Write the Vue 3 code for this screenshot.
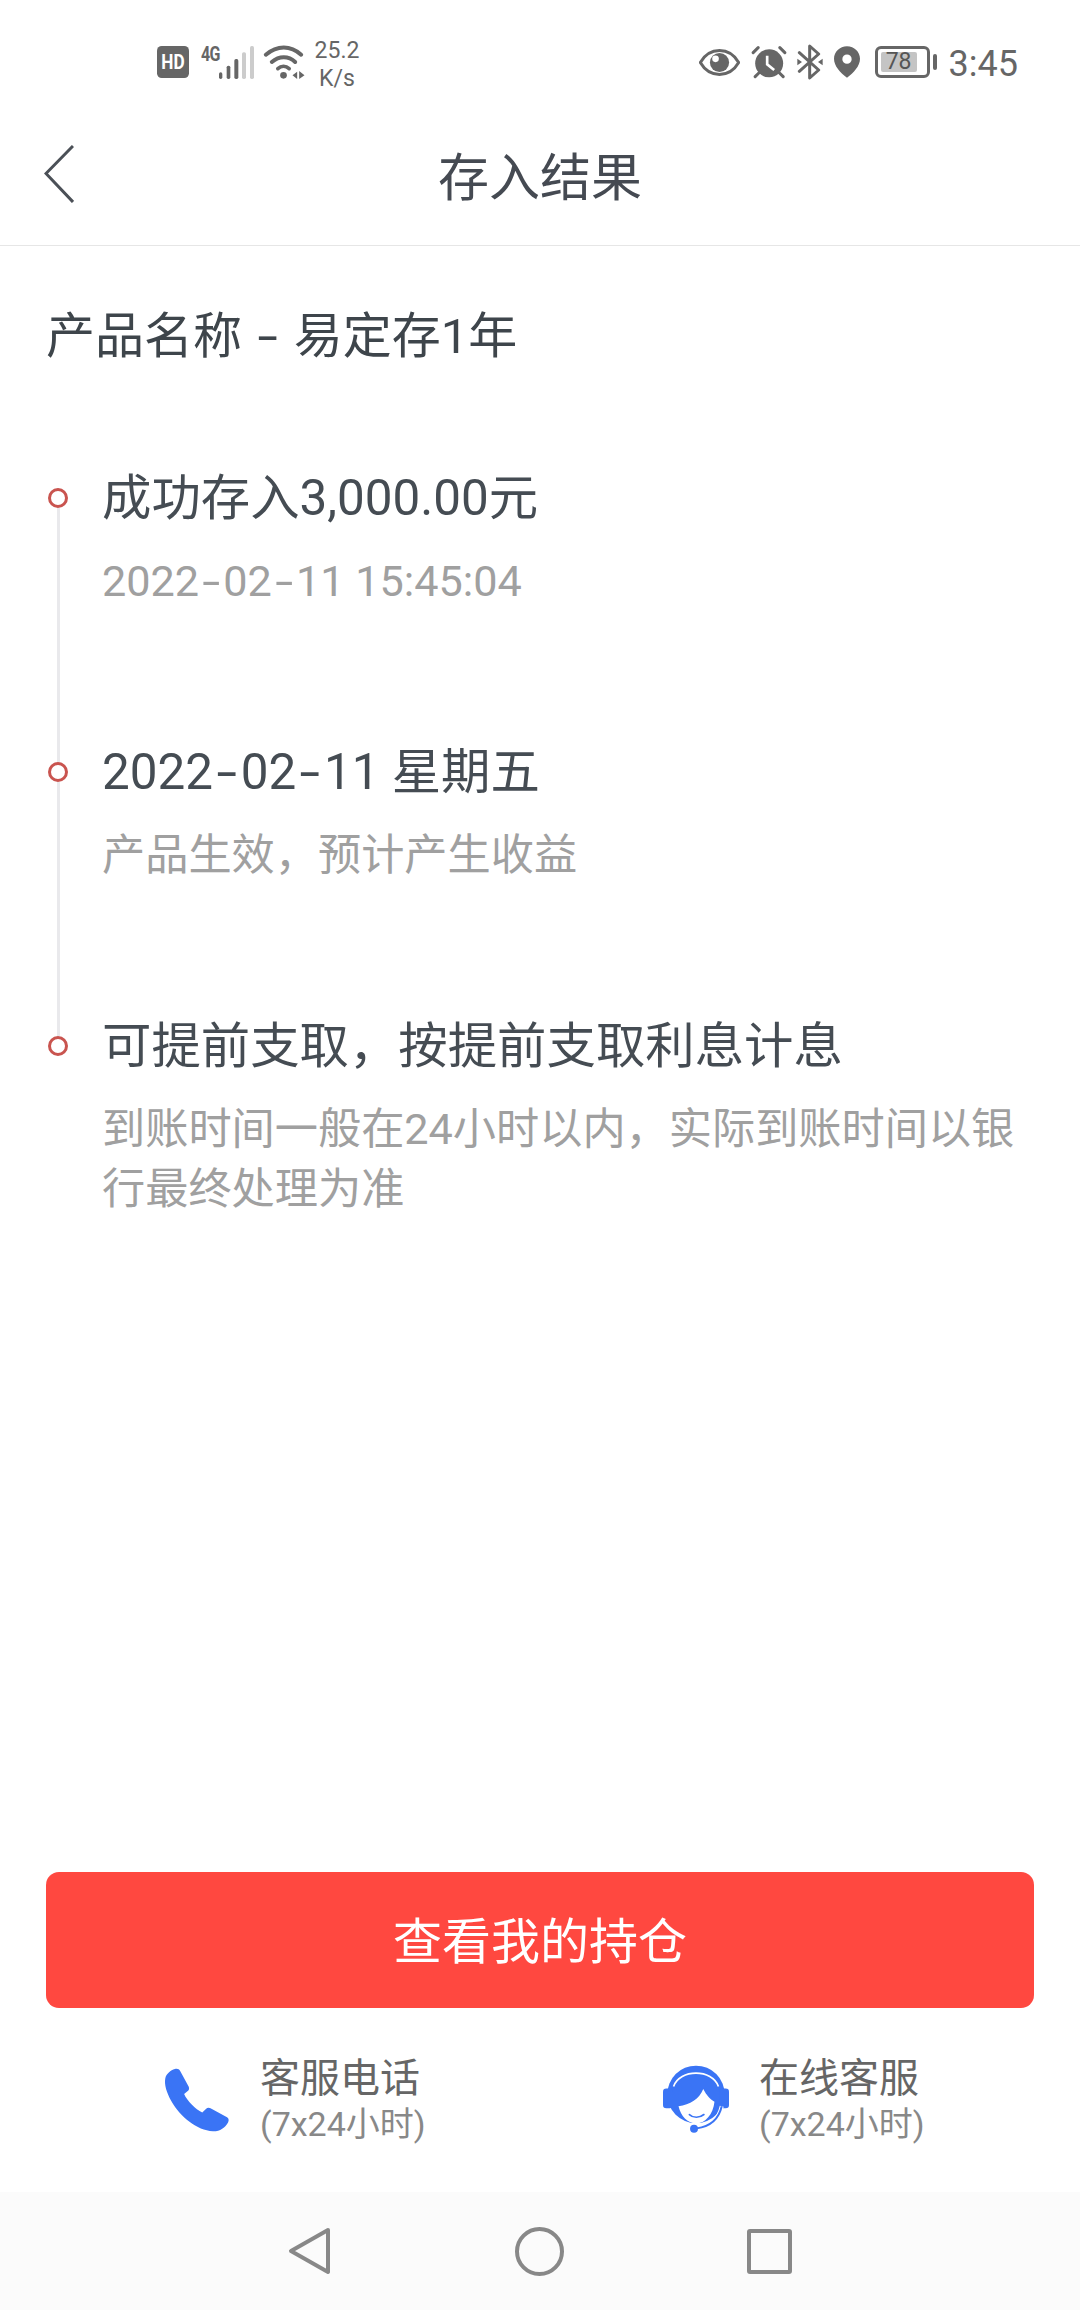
<template>
  <div class="page">
    <div class="status-bar">
      <div class="status-left">
        <svg class="ic-hd" viewBox="52 80 96 96">
          <rect x="52" y="80" width="96" height="96" rx="14" fill="#666" />
          <text x="65" y="150" textLength="70" lengthAdjust="spacingAndGlyphs" class="hd-text">HD</text>
        </svg>
        <div class="network">
          <span class="net-text">4G</span>
          <svg class="ic-signal" viewBox="237 72 108 105">
            <rect x="237" y="154" width="10" height="20" rx="5" fill="#666" />
            <rect x="260" y="134" width="11" height="40" rx="5" fill="#666" />
            <rect x="283" y="114" width="12" height="60" rx="5" fill="#666" />
            <rect x="306" y="94" width="12" height="80" rx="5" fill="#ccc" />
            <rect x="330" y="75" width="12" height="99" rx="5" fill="#ccc" />
          </svg>
        </div>
        <svg class="ic-wifi" viewBox="370 72 125 105">
          <path d="M378 101 C412 72 452 72 484 101" fill="none" stroke="#666" stroke-width="12" stroke-linecap="round" />
          <path d="M396 123 C418 104 446 104 466 123" fill="none" stroke="#666" stroke-width="12" stroke-linecap="round" />
          <path d="M414 143 C424 134 438 134 448 143" fill="none" stroke="#666" stroke-width="11" stroke-linecap="round" />
          <circle cx="431" cy="163" r="10" fill="#666" />
          <path d="M458 163 L472 152 V174 Z M478 150 L494 163 L478 174 Z" fill="#666" />
        </svg>
        <div class="speed">
          <span>25.2</span>
          <span>K/s</span>
        </div>
      </div>
      <div class="status-right">
        <svg class="ic-eye" viewBox="58 84 124 80">
          <path d="M62 124 C90 76 150 76 178 124 C150 172 90 172 62 124 Z" fill="none" stroke="#666" stroke-width="9" stroke-linejoin="round" />
          <circle cx="120" cy="124" r="29" fill="#666" />
          <circle cx="108" cy="113" r="10" fill="#fff" />
        </svg>
        <svg class="ic-alarm" viewBox="215 72 107 102">
          <path d="M221 95 L236 80 M316 95 L301 80" stroke="#666" stroke-width="9" stroke-linecap="round" />
          <path d="M238 156 L227 167 M300 156 L311 167" stroke="#666" stroke-width="9" stroke-linecap="round" />
          <circle cx="269" cy="127" r="42" fill="#666" />
          <path d="M263 104 V130 L284 147" fill="none" stroke="#fff" stroke-width="8" />
        </svg>
        <svg class="ic-bt" viewBox="355 70 78 108">
          <path d="M362 96 L420 148 L393 172 V76 L420 100 L362 152" fill="none" stroke="#666" stroke-width="9" stroke-linejoin="round" stroke-linecap="round" />
          <path d="M356 114 L370 124 L356 134 Z M432 114 L418 124 L432 134 Z" fill="#666" />
        </svg>
        <svg class="ic-pin" viewBox="463 78 78 95">
          <path fill-rule="evenodd" d="M502 78 C524 78 541 95 541 116 C541 138 522 158 502 173 C482 158 463 138 463 116 C463 95 480 78 502 78 Z M502 103 A14 14 0 1 0 502 131 A14 14 0 1 0 502 103 Z" fill="#666" />
        </svg>
        <div class="battery">
          <div class="battery-body">
            <div class="battery-level">78</div>
          </div>
          <div class="battery-cap"></div>
        </div>
        <span class="time">3:45</span>
      </div>
    </div>

    <header class="top-bar">
      <svg class="back" viewBox="0 0 30 58">
        <path d="M29 1 L2 28.5 L29 57" fill="none" stroke="#4b5057" stroke-width="3" />
      </svg>
      <h1>存入结果</h1>
    </header>

    <main class="content">
      <h2 class="product">
        <template v-for="(part, k) in parts('产品名称 - 易定存1年')" :key="k"><span v-if="k" class="dash">-</span>{{ part }}</template>
      </h2>
      <ul class="timeline">
        <li v-for="(step, i) in steps" :key="i" class="step">
          <div class="rail">
            <span class="dot"></span>
            <span v-if="i < steps.length - 1" class="line"></span>
          </div>
          <div class="step-text">
            <div class="step-title">
              <template v-for="(part, k) in parts(step.title)" :key="k"><span v-if="k" class="dash">-</span>{{ part }}</template>
            </div>
            <div class="step-desc">
              <template v-for="(part, k) in parts(step.desc)" :key="k"><span v-if="k" class="dash">-</span>{{ part }}</template>
            </div>
          </div>
        </li>
      </ul>
    </main>

    <div class="actions">
      <button type="button" class="primary">查看我的持仓</button>
      <div class="contacts">
        <div class="contact">
          <svg class="ic-contact" viewBox="70 112 200 200">
            <path d="M103 118 C110 116 116 118 119 124 L145 172 C147 178 146 182 142 185 L131 194 C140 215 165 240 186 250 L197 239 C201 235 206 234 211 237 L261 264 C267 268 267 274 264 280 C256 296 238 308 218 307 C170 303 120 265 92 215 C78 190 70 165 74 146 C77 132 90 122 103 118 Z" fill="#3a74f5" />
          </svg>
          <div class="contact-text">
            <div class="contact-title">客服电话</div>
            <div class="contact-sub">(7x24小时)</div>
          </div>
        </div>
        <div class="contact">
          <svg class="ic-contact" viewBox="68 108 200 210">
            <circle cx="168" cy="196" r="87" fill="#3a74f5" />
            <rect x="68" y="178" width="30" height="60" rx="10" fill="#3a74f5" />
            <rect x="238" y="178" width="30" height="60" rx="10" fill="#3a74f5" />
            <path d="M100 172 C118 118 218 118 236 172" fill="none" stroke="#fff" stroke-width="5" />
            <path d="M115 232 C150 228 178 210 190 180 C200 200 212 212 224 218 C220 256 196 284 168 284 C142 284 122 262 115 232 Z" fill="#fff" />
            <path d="M148 257 C160 268 178 268 192 257" fill="none" stroke="#3a74f5" stroke-width="5" stroke-linecap="round" />
            <path d="M246 232 C236 276 206 294 170 299" fill="none" stroke="#fff" stroke-width="12" />
            <path d="M246 232 C236 276 206 294 170 299" fill="none" stroke="#3a74f5" stroke-width="6" />
            <circle cx="162" cy="300" r="12" fill="#3a74f5" />
          </svg>
          <div class="contact-text">
            <div class="contact-title">在线客服</div>
            <div class="contact-sub">(7x24小时)</div>
          </div>
        </div>
      </div>
    </div>

    <nav class="nav-bar">
      <svg class="nav-back" viewBox="0 0 44 48">
        <path d="M40 3 L3 24 L40 45 Z" fill="none" stroke="#888" stroke-width="4" stroke-linejoin="round" />
      </svg>
      <span class="nav-home"></span>
      <span class="nav-recent"></span>
    </nav>
  </div>
</template>

<script setup>
const steps = [
  { title: '成功存入3,000.00元', desc: '2022-02-11 15:45:04' },
  { title: '2022-02-11 星期五', desc: '产品生效\uFF0C预计产生收益' },
  {
    title: '可提前支取\uFF0C按提前支取利息计息',
    desc: '到账时间一般在24小时以内\uFF0C实际到账时间以银行最终处理为准',
  },
];

// the hyphen in the original font is much wider than Roboto's
const parts = (text) => text.split('-');
</script>

<style>
html,
body {
  margin: 0;
  background: #fff;
}
</style>

<style scoped>
.page {
  width: 1080px;
  height: 2310px;
  display: flex;
  flex-direction: column;
  background: #fff;
  font-family: Roboto, "Noto Sans CJK SC", sans-serif;
  overflow: hidden;
}

.status-bar {
  height: 92px;
  padding: 16px 62px 0 157px;
  display: flex;
  justify-content: space-between;
  align-items: center;
}

.status-left,
.status-right {
  display: flex;
  align-items: center;
}

.ic-hd {
  width: 32px;
  height: 32px;
}

.hd-text {
  font-family: Roboto, sans-serif;
  font-weight: 700;
  font-size: 60px;
  fill: #fff;
}

.network {
  height: 35px;
  margin-left: 12px;
  display: flex;
}

.net-text {
  width: 18px;
  font-size: 20px;
  line-height: 19px;
  font-weight: 700;
  letter-spacing: -1px;
  color: #666;
  transform: scaleX(0.8);
  transform-origin: left;
}

.ic-signal {
  width: 36px;
  height: 35px;
}

.ic-wifi {
  width: 42px;
  height: 35px;
  margin-left: 8px;
}

.speed {
  width: 46px;
  margin-left: 9px;
  padding-top: 5px;
  display: flex;
  flex-direction: column;
  align-items: center;
  font-size: 23px;
  line-height: 28px;
  color: #666;
}

.ic-eye {
  width: 41px;
  height: 27px;
}

.ic-alarm {
  width: 36px;
  height: 34px;
  margin-left: 11px;
}

.ic-bt {
  width: 26px;
  height: 36px;
  margin-left: 10px;
}

.ic-pin {
  width: 26px;
  height: 32px;
  margin-left: 11px;
}

.battery {
  margin-left: 15px;
  display: flex;
  align-items: center;
  gap: 3px;
}

.battery-body {
  width: 55px;
  height: 32px;
  box-sizing: border-box;
  border: 3px solid #666;
  border-radius: 6px;
  padding: 3px;
}

.battery-level {
  width: 36px;
  height: 100%;
  background: #c4c4c4;
  border-radius: 2px;
  font-size: 23px;
  line-height: 20px;
  text-align: center;
  color: #555;
}

.battery-cap {
  width: 4px;
  height: 16px;
  border-radius: 2px;
  background: #666;
}

.time {
  margin-left: 12px;
  margin-top: 4px;
  font-size: 36px;
  line-height: 40px;
  color: #666;
}

.top-bar {
  height: 137px;
  flex: none;
  display: grid;
  grid-template-columns: 1fr auto 1fr;
  align-items: center;
  padding: 0 44px;
  border-bottom: 1px solid #e6e6e6;
}

.back {
  width: 30px;
  height: 58px;
  margin-top: -6px;
}

h1 {
  margin: 4px 0 0;
  font-size: 51px;
  font-weight: 400;
  line-height: 64px;
  color: #454a52;
}

.content {
  flex: 1;
  padding: 60px 46px 0;
}

.product {
  margin: 0 0 120px;
  font-size: 49px;
  font-weight: 400;
  line-height: 62px;
  color: #3e454b;
}

.dash {
  display: inline-block;
  width: 0.56em;
  text-align: center;
  transform: scaleX(1.5);
}

.timeline {
  list-style: none;
  margin: 0;
  padding: 0 0 0 2px;
}

.step {
  display: flex;
}

.rail {
  width: 20px;
  flex: none;
  display: flex;
  flex-direction: column;
  align-items: flex-start;
}

.dot {
  width: 20px;
  height: 20px;
  flex: none;
  box-sizing: border-box;
  border: 3px solid #c9544f;
  border-radius: 50%;
}

.line {
  flex: 1;
  width: 3px;
  margin-left: 9px;
  background: #e9e9ec;
}

.step-text {
  margin: -22px 0 0 34px;
  padding-bottom: 150px;
  flex: 1;
}

.step-title {
  font-size: 49.4px;
  line-height: 64px;
  color: #454c53;
}

.step-desc {
  margin-top: 22px;
  font-size: 43.2px;
  line-height: 60px;
  color: #a0a0a0;
}

.actions {
  flex: none;
  padding: 0 46px;
}

.primary {
  display: block;
  width: 100%;
  height: 136px;
  border: 0;
  border-radius: 13px;
  background: #ff4840;
  color: #fff;
  font-family: inherit;
  font-size: 49px;
  padding: 0 0 6px;
}

.contacts {
  height: 184px;
  padding-left: 118px;
  display: grid;
  grid-template-columns: 499px 1fr;
  align-items: start;
}

.contact {
  padding-top: 46px;
  display: flex;
  align-items: center;
  gap: 30px;
}

.ic-contact {
  width: 66px;
  height: 70px;
  flex: none;
}

.contact-text {
  margin-top: 1px;
  display: flex;
  flex-direction: column;
}

.contact-title {
  font-size: 40px;
  line-height: 48px;
  color: #666;
}

.contact-sub {
  font-size: 34px;
  line-height: 42px;
  color: #888;
}

.nav-bar {
  height: 118px;
  flex: none;
  background: #fbfbfb;
  display: flex;
  align-items: center;
  justify-content: center;
  gap: 183px;
}

.nav-back {
  width: 44px;
  height: 48px;
}

.nav-home {
  width: 49px;
  height: 49px;
  box-sizing: border-box;
  border: 4px solid #888;
  border-radius: 50%;
}

.nav-recent {
  width: 45px;
  height: 45px;
  box-sizing: border-box;
  border: 4px solid #888;
  border-radius: 3px;
}
</style>
